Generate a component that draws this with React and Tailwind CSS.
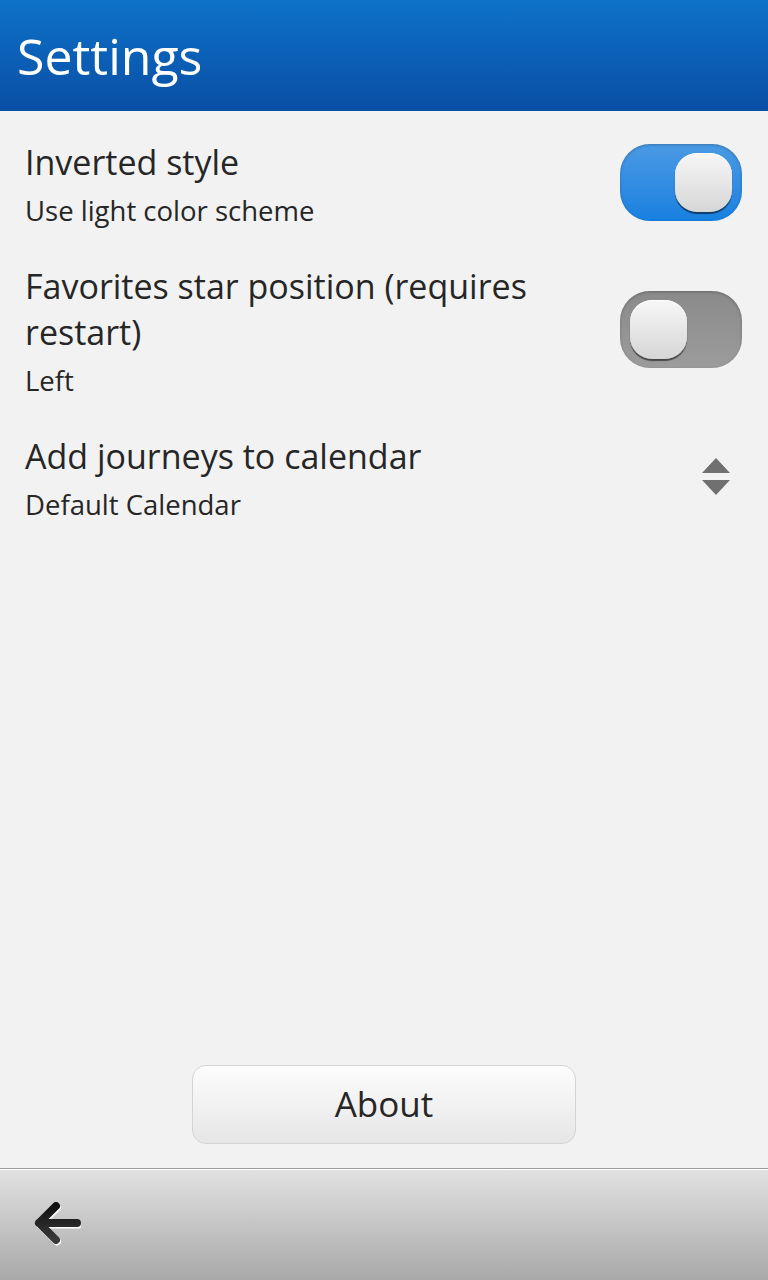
import React from "react";

const font = { fontFamily: '"Open Sans", "Noto Sans", sans-serif' };

function Toggle({ on }) {
  return (
    <div
      className={`mb-[7px] flex h-[77px] w-[122px] items-center rounded-[30px] px-[10px] shadow-[inset_0_1px_3px_rgba(0,0,0,0.25)] ${
        on
          ? "justify-end bg-gradient-to-b from-[#4a9ae4] to-[#1680e0]"
          : "justify-start bg-gradient-to-b from-[#8a8a8a] to-[#9c9c9c]"
      }`}
    >
      <div className="h-[59px] w-[57px] rounded-[22px] bg-gradient-to-b from-[#f7f7f7] to-[#d6d6d6] shadow-[0_2px_1px_rgba(0,0,0,0.55),inset_0_1px_0_#ffffff]" />
    </div>
  );
}

function Row({ title, sub, children }) {
  return (
    <div className="flex items-center justify-between pl-[25px] pr-[26px]">
      <div className="flex-1 pr-4">
        <div className="text-[34px] leading-[46px] text-[#262626]">{title}</div>
        <div className="mt-[5px] text-[27.5px] leading-[42px] text-[#262626]">{sub}</div>
      </div>
      {children}
    </div>
  );
}

export default function App() {
  return (
    <div className="flex h-[1280px] w-[768px] flex-col bg-[#f2f2f2]" style={font}>
      <header className="flex h-[111px] items-center bg-gradient-to-b from-[#0e73c8] to-[#0a4ea5] pl-[17px]">
        <h1 className="text-[50px] leading-none text-white">Settings</h1>
      </header>

      <div className="flex flex-col gap-[31px] pt-[28px]">
        <Row title="Inverted style" sub="Use light color scheme">
          <Toggle on />
        </Row>
        <Row title="Favorites star position (requires restart)" sub="Left">
          <Toggle on={false} />
        </Row>
        <Row title="Add journeys to calendar" sub="Default Calendar">
          <div className="pr-[12px] pb-[6px]">
            <svg width="28" height="38" viewBox="0 0 28 38">
              <path d="M14 0 L28 15 L0 15 Z" fill="#707070" />
              <path d="M0 22 L28 22 L14 37 Z" fill="#707070" />
            </svg>
          </div>
        </Row>
      </div>

      <div className="flex-1" />

      <div className="flex justify-center pb-[24px]">
        <button className="flex h-[79px] w-[384px] items-center justify-center rounded-[14px] border border-[#d4d4d4] bg-gradient-to-b from-[#fdfdfd] to-[#e6e6e6] text-[35px] text-[#262626]">
          About
        </button>
      </div>

      <footer className="flex h-[112px] items-center border-t border-[#9a9a9a] bg-gradient-to-b from-[#e2e2e2] to-[#a9a9a9] pl-[33px] shadow-[inset_0_1px_0_#ffffff]">
        <svg width="48" height="46" viewBox="0 0 48 46">
          <defs>
            <linearGradient id="ag" x1="0" y1="0" x2="0" y2="1">
              <stop offset="0" stopColor="#111" />
              <stop offset="1" stopColor="#3a3a3a" />
            </linearGradient>
          </defs>
          <path
            d="M23 4 L6 21 L23 38 M6 21 L44 21"
            fill="none"
            stroke="#ffffff"
            strokeWidth="8"
            strokeLinecap="round"
            strokeLinejoin="round"
            transform="translate(1 1.5)"
          />
          <path
            d="M23 4 L6 21 L23 38 M6 21 L44 21"
            fill="none"
            stroke="url(#ag)"
            strokeWidth="8"
            strokeLinecap="round"
            strokeLinejoin="round"
          />
        </svg>
      </footer>
    </div>
  );
}
